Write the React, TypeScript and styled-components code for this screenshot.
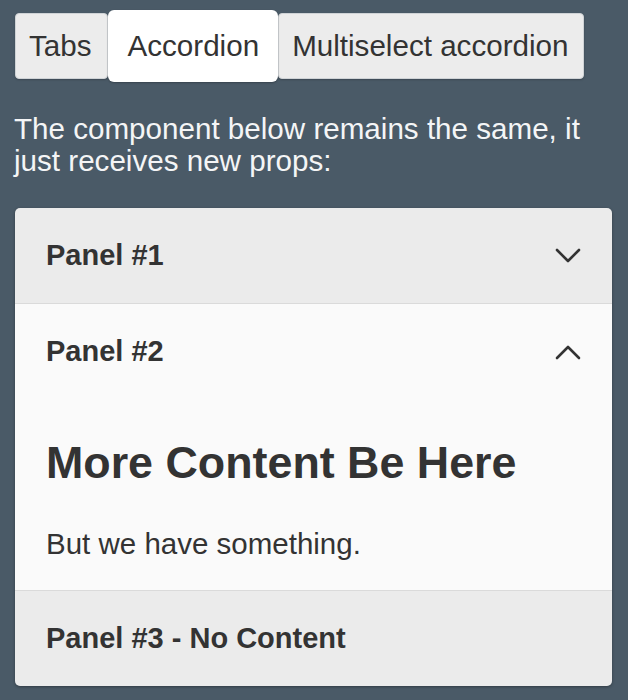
import type { FC } from 'react';
import styled, { createGlobalStyle, css } from 'styled-components';

const GlobalStyle = createGlobalStyle`
  html, body {
    margin: 0;
    padding: 0;
    background: #4a5a67;
  }
  body {
    font-family: 'Liberation Sans', Arial, Helvetica, sans-serif;
    color: #333;
  }
`;

interface TabProps {
  isActive?: boolean;
}

interface PanelProps {
  isOpen?: boolean;
}

const tabs = ['Tabs', 'Accordion', 'Multiselect accordion'];

const panels = [
  { title: 'Panel #1', hasContent: true, open: false },
  { title: 'Panel #2', hasContent: true, open: true },
  { title: 'Panel #3 - No Content', hasContent: false, open: false },
];

const Chevron: FC<{ up?: boolean }> = ({ up }) => (
  <ChevronSvg viewBox="0 0 26 16" width={26} height={16}>
    <polyline
      points={up ? '2,14 13,3 24,14' : '2,2 13,13 24,2'}
      fill="none"
      stroke="#333"
      strokeWidth={2.6}
      strokeLinecap="round"
      strokeLinejoin="round"
    />
  </ChevronSvg>
);

const App: FC = () => {
  return (
    <>
      <GlobalStyle />
      <Page>
        <TabBar>
          {tabs.map(tab => (
            <Tab key={tab} isActive={tab === 'Accordion'}>
              {tab}
            </Tab>
          ))}
        </TabBar>
        <Intro>The component below remains the same, it just receives new props:</Intro>
        <Accordion>
          {panels.map(panel => (
            <Panel key={panel.title} isOpen={panel.open}>
              <PanelHeader>
                <PanelTitle>{panel.title}</PanelTitle>
                {panel.hasContent ? <Chevron up={panel.open} /> : null}
              </PanelHeader>
              {panel.open ? (
                <PanelBody>
                  <BodyHeading>More Content Be Here</BodyHeading>
                  <BodyText>But we have something.</BodyText>
                </PanelBody>
              ) : null}
            </Panel>
          ))}
        </Accordion>
      </Page>
    </>
  );
};

export default App;

const Page = styled.div`
  padding: 10px 16px 14px 15px;
`;

const TabBar = styled.div`
  display: flex;
  align-items: center;
`;

const Tab = styled.div<TabProps>`
  font-size: 29.6px;
  line-height: 34px;
  color: #333;
  white-space: nowrap;
  box-sizing: border-box;
  ${({ isActive }) =>
    isActive
      ? css`
          background: #fff;
          padding: 19px 19px 19px 20px;
          border-radius: 6px;
          position: relative;
          z-index: 1;
          box-shadow: 0 1px 2px rgba(0, 0, 0, 0.25);
        `
      : css`
          background: #ececec;
          padding: 15px 15px 15px 13px;
          border-radius: 4px;
          border: 1px solid #cfd3d6;
          box-shadow: 0 1px 2px rgba(0, 0, 0, 0.2);
        `}
`;

const Intro = styled.p`
  margin: 31px 0 31px -1px;
  font-size: 29.6px;
  line-height: 32px;
  color: #f4f5f6;
`;

const Accordion = styled.div`
  display: flex;
  flex-direction: column;
  border-radius: 5px;
  overflow: hidden;
  box-shadow: 0 1px 3px rgba(0, 0, 0, 0.35);
`;

const Panel = styled.div<PanelProps>`
  background: ${({ isOpen }) => (isOpen ? '#fafafa' : '#ebebeb')};
  & + & {
    border-top: 1px solid #dadada;
  }
`;

const PanelHeader = styled.div`
  display: flex;
  align-items: center;
  justify-content: space-between;
  height: 95px;
  padding: 0 31px 0 31px;
`;

const PanelTitle = styled.span`
  font-size: 29px;
  font-weight: 700;
  color: #333;
`;

const ChevronSvg = styled.svg`
  display: block;
`;

const PanelBody = styled.div`
  padding: 37px 31px 29px 31px;
`;

const BodyHeading = styled.h2`
  margin: 0 0 37px;
  font-size: 44.8px;
  line-height: 53px;
  font-weight: 700;
  color: #333;
`;

const BodyText = styled.p`
  margin: 0;
  font-size: 29.5px;
  line-height: 35px;
  color: #333;
`;
